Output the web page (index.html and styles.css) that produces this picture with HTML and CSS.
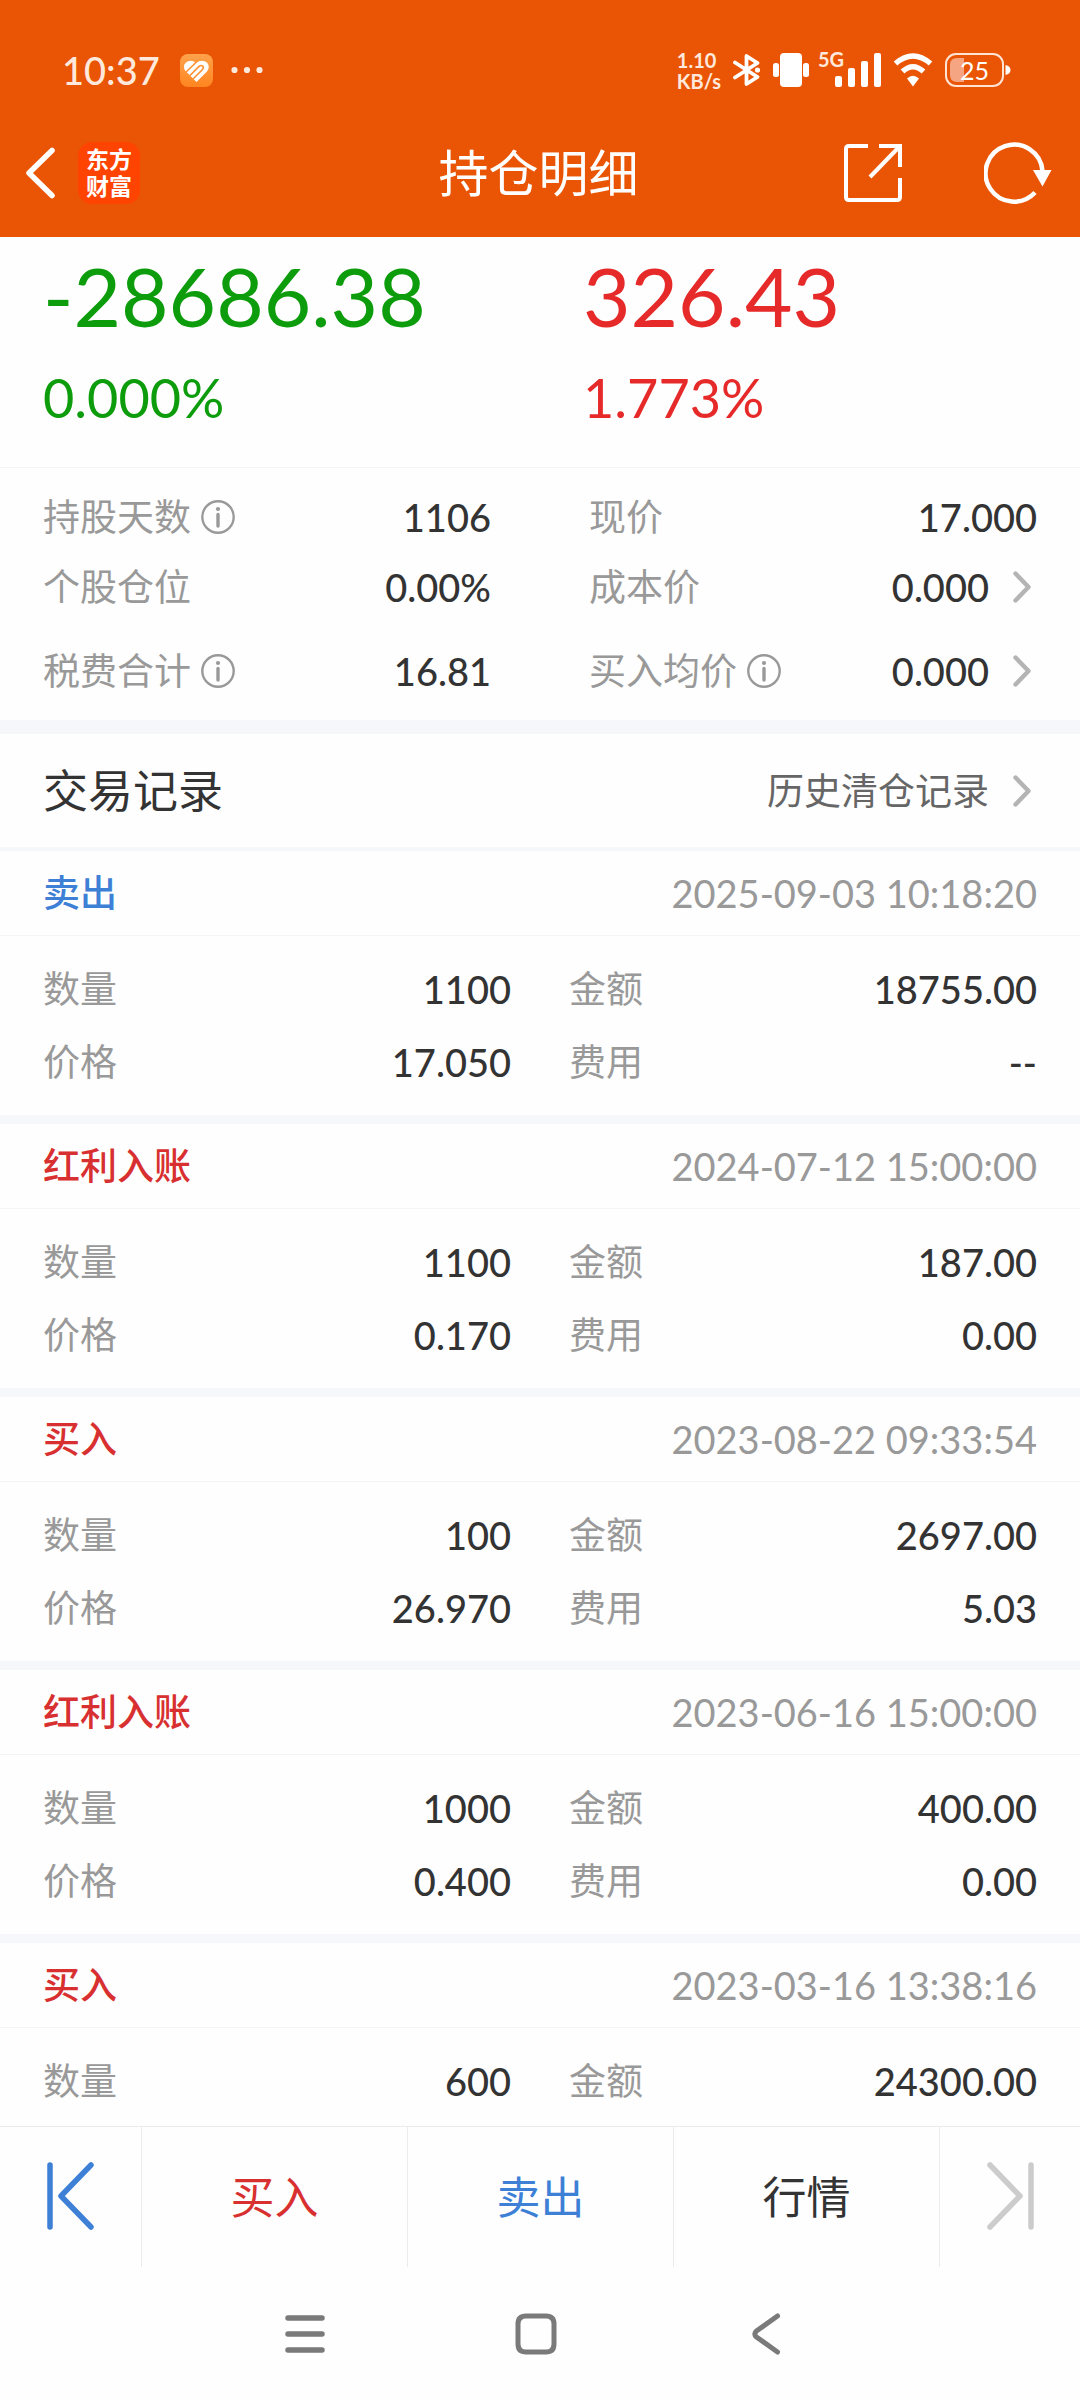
FILE: index.html
```html
<!DOCTYPE html>
<html lang="zh-CN">
<head>
<meta charset="utf-8">
<meta name="viewport" content="width=device-width, initial-scale=1">
<title>持仓明细</title>
<link rel="stylesheet" href="styles.css">
</head>
<body>
<svg class="defs" width="0" height="0" aria-hidden="true">
  <symbol id="info" viewBox="0 0 34 34"><circle cx="17" cy="17" r="15.7" fill="none" stroke="currentColor" stroke-width="2.4"/><circle cx="17" cy="9" r="2.1" fill="currentColor"/><path d="M17 14.5v11.5" stroke="currentColor" stroke-width="3.4" stroke-linecap="round"/></symbol>
  <symbol id="chev" viewBox="0 0 18 32"><path d="M2.5 2.5 15.5 16 2.5 29.5" fill="none" stroke="currentColor" stroke-width="4.4" stroke-linecap="round" stroke-linejoin="round"/></symbol>
</svg>

<header class="top">
  <div class="status">
    <div class="status-side">
      <span class="clock">10:37</span>
      <svg class="app-badge" viewBox="0 0 33 33" width="33" height="33"><defs><linearGradient id="g" x1="0" y1="0" x2="0" y2="1"><stop offset="0" stop-color="#ffa24c"/><stop offset="1" stop-color="#ff8520"/></linearGradient></defs><rect width="33" height="33" rx="8" fill="url(#g)"/><path d="M16.500 28 5.500 17Q2 12 6 8.500Q11 5 16 9Q22 5 27 8.500Q30.500 13 27 17.500Z" fill="#fff"/><path d="M4.500 19.500 17 7.500M8.500 23 19 12.500Q21.500 10.500 23 12.500Q24 14 22 16L12.500 25.500" fill="none" stroke="#ff9437" stroke-width="1.700"/></svg>
      <svg viewBox="0 0 32 8" width="32" height="8" fill="#ffe9dc"><circle cx="3.5" cy="4" r="3.1"/><circle cx="16" cy="4" r="3.1"/><circle cx="28.5" cy="4" r="3.1"/></svg>
    </div>
    <div class="status-side status-right">
      <span class="speed"><span>1.10</span><span>KB/s</span></span>
      <svg viewBox="0 0 28 34" width="28" height="34"><path d="M2 9.5 24.5 24 13.5 31V3L24.5 10 2 24.5" fill="none" stroke="#fff" stroke-width="3.8" stroke-linejoin="round" stroke-linecap="round"/><circle cx="24.5" cy="17" r="2.6" fill="#fff"/></svg>
      <svg viewBox="0 0 36 34" width="36" height="34" fill="#fff"><rect x="7" width="22" height="34" rx="4"/><rect y="10" width="6" height="14" rx="2.5"/><rect x="30" y="10" width="6" height="14" rx="2.5"/></svg>
      <span class="signal"><span class="gen">5G</span><svg viewBox="0 0 46 34" width="46" height="34" fill="#fff"><rect x="0" y="23" width="7" height="11" rx="2"/><rect x="13" y="15" width="7" height="19" rx="2"/><rect x="26" y="8" width="7" height="26" rx="2"/><rect x="39" y="0" width="7" height="34" rx="2"/></svg></span>
      <svg viewBox="0 0 40 34" width="40" height="34"><path d="M2.5 10.5Q20-4.5 37.5 10.5" fill="none" stroke="#fff" stroke-width="5.5"/><path d="M9.5 18.5Q20 9 30.5 18.5" fill="none" stroke="#fff" stroke-width="5.5"/><path d="M14 25.5Q20 20 26 25.5L20 33.5Z" fill="#fff"/></svg>
      <span class="battery"><svg viewBox="0 0 66 34" width="66" height="34"><path d="M19 5H12Q5 5 5 12v10q0 7 7 7h7Z" fill="#f6a582"/><rect x="1" y="1" width="57" height="32" rx="10" fill="none" stroke="#ffe4d4" stroke-width="2"/><path d="M60.5 12q5 1 5 5t-5 5Z" fill="#fff"/></svg><span class="level">25</span></span>
    </div>
  </div>
  <nav class="bar">
    <div class="bar-side">
      <button class="icon-btn" aria-label="返回"><svg viewBox="0 0 30 52" width="30" height="52"><path d="M27 3.5 4 26 27 48.5" fill="none" stroke="#fff" stroke-width="5.5" stroke-linecap="round" stroke-linejoin="round"/></svg></button>
      <span class="logo">东方<br>财富</span>
    </div>
    <h1 class="page-title">持仓明细</h1>
    <div class="bar-side bar-actions">
      <button class="icon-btn" aria-label="分享"><svg viewBox="0 0 60 60" width="60" height="60" fill="none" stroke="#fff" stroke-width="4"><path d="M25 3H6Q3 3 3 6V54Q3 57 6 57H54Q57 57 57 54V35"/><path d="M36 3H57V24M57 3 27 34"/></svg></button>
      <button class="icon-btn" aria-label="刷新"><svg viewBox="0 0 68 62" width="68" height="62"><path d="M58.5 29A28.5 28.5 0 1 0 51 50.5" fill="none" stroke="#fff" stroke-width="4.5"/><path d="M49 28H67.5L58.5 44.5Z" fill="#fff"/></svg></button>
    </div>
  </nav>
</header>

<main class="content">
  <section class="summary">
    <div class="sum down"><strong class="amount">-28686.38</strong><span class="rate">0.000%</span></div>
    <div class="sum up"><strong class="amount">326.43</strong><span class="rate">1.773%</span></div>
  </section>

  <dl class="stats">
    <div class="pair"><dt>持股天数<svg class="info"><use href="#info"/></svg></dt><dd>1106</dd></div>
    <div class="pair"><dt>现价</dt><dd>17.000</dd></div>
    <div class="pair"><dt>个股仓位</dt><dd>0.00%</dd></div>
    <div class="pair"><dt>成本价</dt><dd>0.000<svg class="chev"><use href="#chev"/></svg></dd></div>
    <div class="pair"><dt>税费合计<svg class="info"><use href="#info"/></svg></dt><dd>16.81</dd></div>
    <div class="pair"><dt>买入均价<svg class="info"><use href="#info"/></svg></dt><dd>0.000<svg class="chev"><use href="#chev"/></svg></dd></div>
  </dl>

  <section>
    <div class="section-head">
      <h2 class="section-title">交易记录</h2>
      <a class="history" href="#">历史清仓记录<svg class="chev"><use href="#chev"/></svg></a>
    </div>

    <article class="record">
      <div class="record-head"><h3 class="kind sell">卖出</h3><time>2025-09-03 10:18:20</time></div>
      <dl class="record-body">
        <div class="pair"><dt>数量</dt><dd>1100</dd></div><div class="pair"><dt>金额</dt><dd>18755.00</dd></div>
        <div class="pair"><dt>价格</dt><dd>17.050</dd></div><div class="pair"><dt>费用</dt><dd>--</dd></div>
      </dl>
    </article>
    <article class="record">
      <div class="record-head"><h3 class="kind buy">红利入账</h3><time>2024-07-12 15:00:00</time></div>
      <dl class="record-body">
        <div class="pair"><dt>数量</dt><dd>1100</dd></div><div class="pair"><dt>金额</dt><dd>187.00</dd></div>
        <div class="pair"><dt>价格</dt><dd>0.170</dd></div><div class="pair"><dt>费用</dt><dd>0.00</dd></div>
      </dl>
    </article>
    <article class="record">
      <div class="record-head"><h3 class="kind buy">买入</h3><time>2023-08-22 09:33:54</time></div>
      <dl class="record-body">
        <div class="pair"><dt>数量</dt><dd>100</dd></div><div class="pair"><dt>金额</dt><dd>2697.00</dd></div>
        <div class="pair"><dt>价格</dt><dd>26.970</dd></div><div class="pair"><dt>费用</dt><dd>5.03</dd></div>
      </dl>
    </article>
    <article class="record">
      <div class="record-head"><h3 class="kind buy">红利入账</h3><time>2023-06-16 15:00:00</time></div>
      <dl class="record-body">
        <div class="pair"><dt>数量</dt><dd>1000</dd></div><div class="pair"><dt>金额</dt><dd>400.00</dd></div>
        <div class="pair"><dt>价格</dt><dd>0.400</dd></div><div class="pair"><dt>费用</dt><dd>0.00</dd></div>
      </dl>
    </article>
    <article class="record">
      <div class="record-head"><h3 class="kind buy">买入</h3><time>2023-03-16 13:38:16</time></div>
      <dl class="record-body">
        <div class="pair"><dt>数量</dt><dd>600</dd></div><div class="pair"><dt>金额</dt><dd>24300.00</dd></div>
      </dl>
    </article>
  </section>
</main>

<footer class="bottom">
  <div class="trade">
    <button class="step prev" aria-label="上一只"><svg viewBox="0 0 48 68" width="48" height="68" fill="none" stroke="currentColor" stroke-width="5.5" stroke-linecap="round" stroke-linejoin="round"><path d="M3 3V65M44 3 14 34 44 65"/></svg></button>
    <button class="act buy">买入</button>
    <button class="act sell">卖出</button>
    <button class="act">行情</button>
    <button class="step next" aria-label="下一只"><svg viewBox="0 0 48 68" width="48" height="68" fill="none" stroke="currentColor" stroke-width="5.5" stroke-linecap="round" stroke-linejoin="round"><path d="M45 3V65M4 3 34 34 4 65"/></svg></button>
  </div>
  <div class="system">
    <button class="icon-btn" aria-label="菜单"><svg viewBox="0 0 42 42" width="42" height="42" stroke="#7a7a7a" stroke-width="5.5" stroke-linecap="round"><path d="M4 5H38M4 21H38M4 37H38"/></svg></button>
    <button class="icon-btn" aria-label="主页"><svg viewBox="0 0 42 42" width="42" height="42"><path d="M11 3H31Q39 3 39 11V31Q39 39 31 39H11Q3 39 3 31V11Q3 3 11 3Z" fill="none" stroke="#7a7a7a" stroke-width="5"/></svg></button>
    <button class="icon-btn" aria-label="后退"><svg viewBox="0 0 42 42" width="42" height="42"><path d="M31.5 3 10.5 18Q7 21 10.5 24L31.5 39" fill="none" stroke="#7a7a7a" stroke-width="5" stroke-linecap="round"/></svg></button>
  </div>
</footer>
</body>
</html>
```
FILE: styles.css
```css
* { box-sizing: border-box; }

body {
  margin: 0;
  height: 100vh;
  display: flex;
  flex-direction: column;
  background: #fefefe;
  color: #333;
  font-family: "Lato", "Noto Sans CJK SC", sans-serif;
  font-size: 37px;
  line-height: 54px;
}

h1, h2, h3, dl, dd { margin: 0; font-weight: 400; }

button {
  border: 0;
  padding: 0;
  background: none;
  color: inherit;
  font: inherit;
}

svg { display: block; flex: none; }
.defs { position: absolute; }

/* Header */
.top { background: #e95504; color: #fff; flex: none; }

.status {
  display: flex;
  justify-content: space-between;
  padding: 31px 69px 0 62px;
  height: 109px;
}
.status-side { display: flex; align-items: center; }
.clock { font-size: 38px; font-weight: 500; color: #ffe9dc; }
.app-badge { margin: 0 18px 0 20px; }
.status-right { gap: 12px; }
.speed {
  display: flex;
  flex-direction: column;
  gap: 1px;
  font-size: 20px;
  line-height: 20px;
  font-weight: 700;
  color: #ffe9dc;
}
.signal { position: relative; padding-left: 14px; }
.gen {
  position: absolute;
  left: -3px;
  top: -4px;
  font-size: 20px;
  line-height: 20px;
  font-weight: 700;
  color: #ffe9dc;
}
.battery { position: relative; }
.level {
  position: absolute;
  left: 15px;
  top: 0;
  font-size: 25px;
  line-height: 34px;
  color: #fff;
}

.bar {
  display: grid;
  grid-template-columns: 1fr auto 1fr;
  align-items: center;
  height: 128px;
  padding: 0 28px 0 25px;
}
.bar-side { display: flex; align-items: center; gap: 23px; }
.bar-actions { justify-content: flex-end; gap: 81px; }
.page-title { font-size: 50px; line-height: 74px; }
.logo {
  width: 62px;
  height: 62px;
  padding-top: 4px;
  border-radius: 14px;
  background: #ff4300;
  font-size: 23px;
  line-height: 27px;
  font-weight: 700;
  text-align: center;
}

/* Profit summary */
.content { flex: 1; min-height: 0; overflow: hidden; }
.summary {
  display: grid;
  grid-template-columns: 1fr 1fr;
  border-bottom: 1px solid #f3f4f6;
}
.sum { display: flex; flex-direction: column; gap: 20px; padding: 8px 0 36px 43px; }
.amount { font-size: 82px; line-height: 100px; font-weight: 400; }
.rate { font-size: 54px; line-height: 66px; }
.down { color: #0c9c0c; }
.up { color: #e62a2a; }

/* Label and value pairs */
.pair { display: flex; justify-content: space-between; align-items: center; height: 70px; }
dt { display: flex; align-items: center; gap: 10px; color: #999; }
dd { display: flex; align-items: center; gap: 24px; font-size: 38px; font-weight: 500; }
.info { width: 34px; height: 34px; }
.chev { width: 18px; height: 32px; margin-right: 6px; color: #b4b4b4; }

.stats {
  display: grid;
  grid-template-columns: 1fr 1fr;
  column-gap: 98px;
  padding: 14px 43px 0;
  border-bottom: 14px solid #f6f7fa;
}
.stats .pair:nth-last-child(-n+2) { height: 98px; }

/* Records */
.section-head {
  display: flex;
  justify-content: space-between;
  align-items: center;
  height: 117px;
  padding: 0 43px;
  border-bottom: 4px solid #f5f7f8;
}
.section-title { font-size: 45px; line-height: 64px; }
.history { display: flex; align-items: center; gap: 24px; color: #666; text-decoration: none; }

.record { border-bottom: 9px solid #f6f7fa; }
.record:last-child { border-bottom: 0; }
.record-head {
  display: flex;
  justify-content: space-between;
  align-items: center;
  height: 85px;
  padding: 0 43px;
  border-bottom: 1px solid #f3f4f6;
}
.kind { font-size: 37px; font-weight: 500; }
.buy { color: #d83030; }
.sell { color: #3d80d6; }
time { font-size: 38px; color: #999; }
.record-body {
  display: grid;
  grid-template-columns: 1fr 1fr;
  column-gap: 58px;
  padding: 16px 43px 17px;
}
.record-body .pair { height: 73px; }

/* Bottom bars */
.bottom { flex: none; background: #fefefe; }
.trade { display: flex; height: 141px; border-top: 1px solid #ebebeb; }
.step {
  width: 141px;
  display: flex;
  align-items: center;
  justify-content: center;
  padding-bottom: 3px;
}
.prev { color: #3d80d6; }
.next { color: #ccc; }
.act { flex: 1; font-size: 44px; border-left: 1px solid #ebebeb; }
.next { border-left: 1px solid #ebebeb; }
.system {
  display: flex;
  justify-content: center;
  gap: 189px;
  height: 133px;
  padding-right: 9px;
}
.system .icon-btn { display: flex; align-items: center; }
```
